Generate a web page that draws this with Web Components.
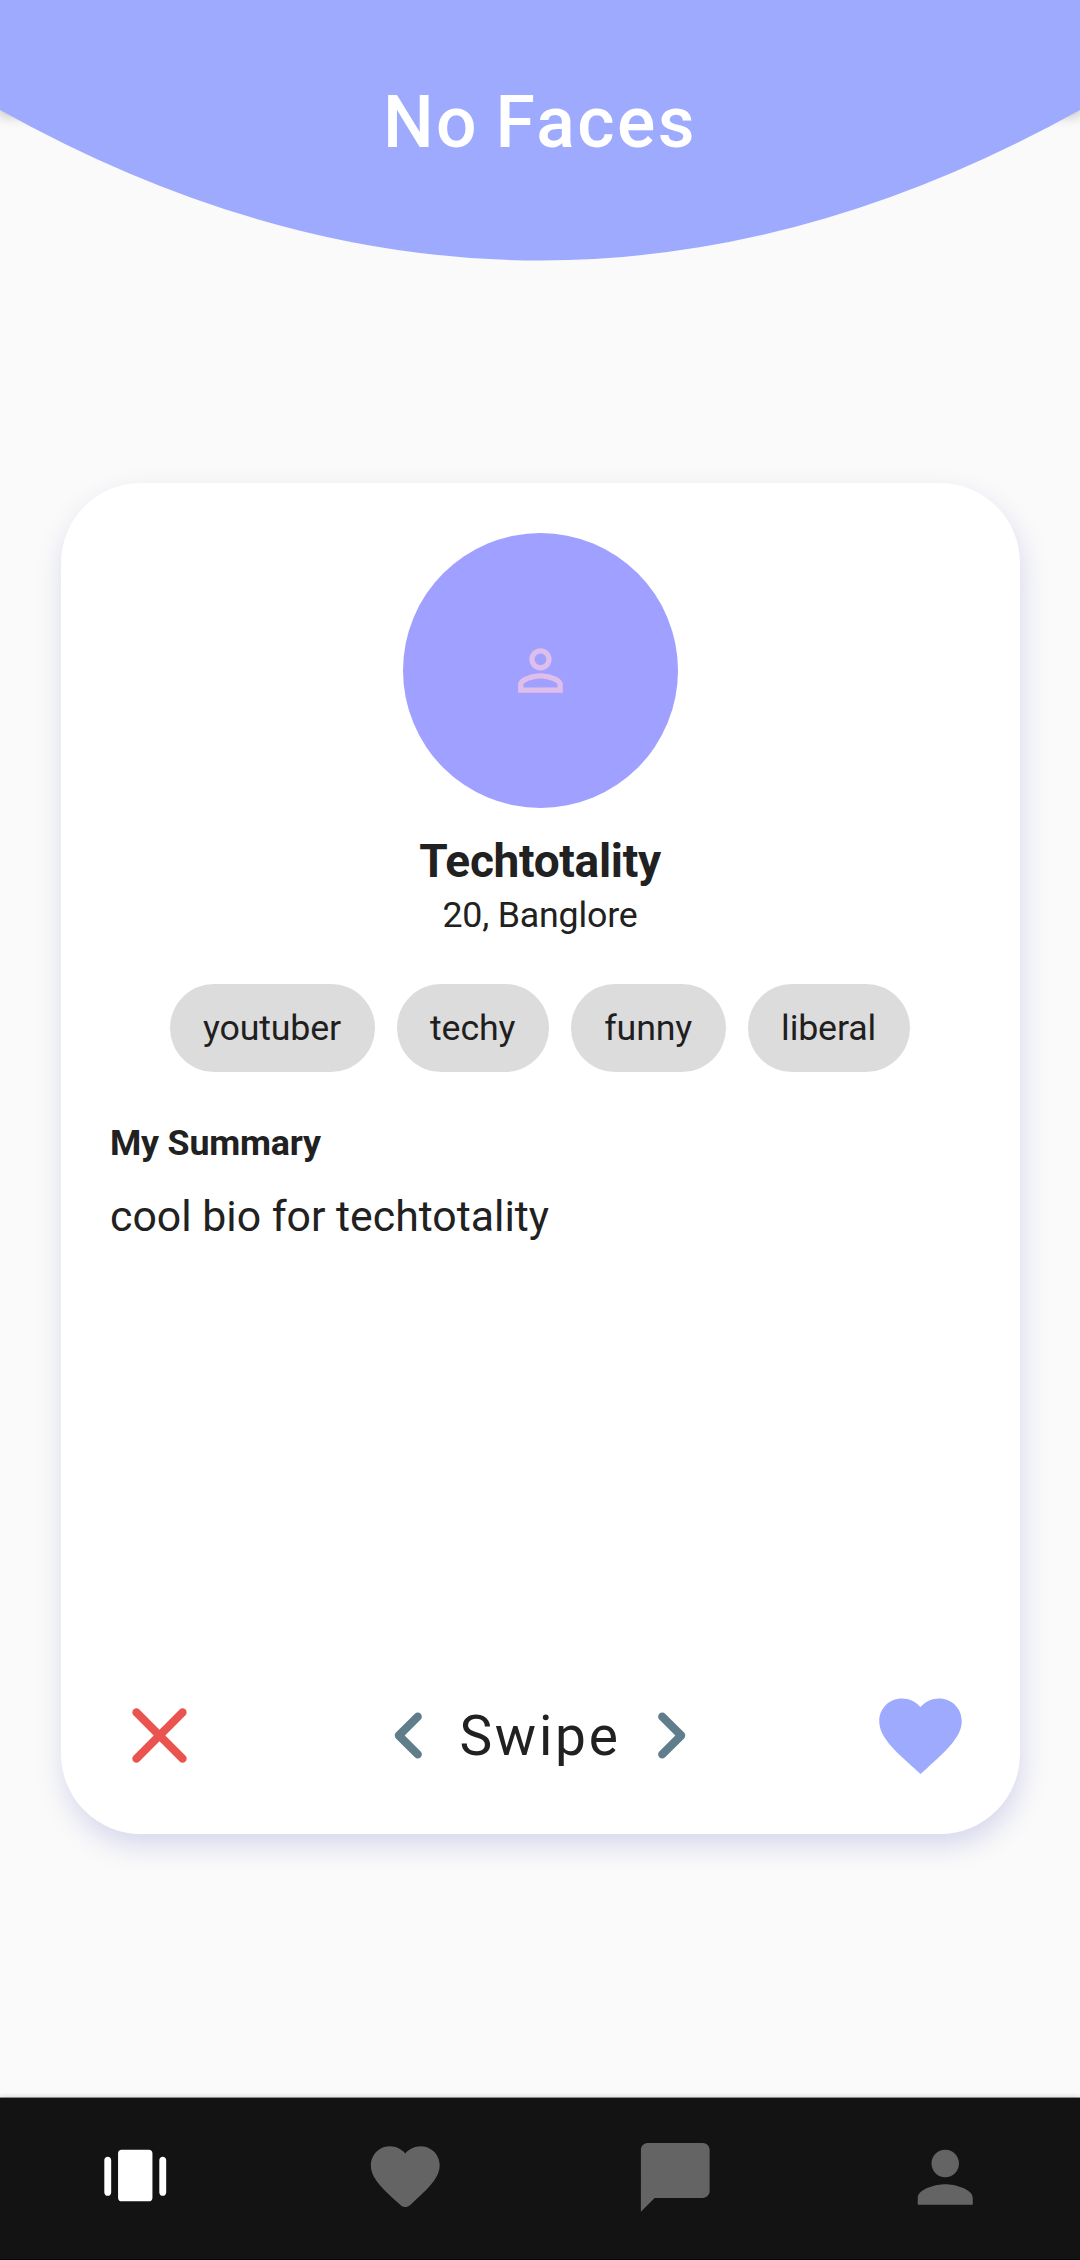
<!DOCTYPE html>
<html lang="en">
<head>
<meta charset="utf-8">
<title>No Faces</title>
<style>
html, body { margin: 0; background: #fafafa; }
body { font-family: Roboto, sans-serif; color: #212121; }
</style>
</head>
<body>
<faces-app></faces-app>
<script>
function define(name, html) {
  const template = document.createElement('template');
  template.innerHTML = html;
  customElements.define(name, class extends HTMLElement {
    constructor() {
      super();
      this.attachShadow({ mode: 'open' }).appendChild(template.content.cloneNode(true));
    }
  });
}

const ICONS = {
  close: 'M18.3 5.71c-.39-.39-1.02-.39-1.41 0L12 10.59 7.11 5.7c-.39-.39-1.02-.39-1.41 0-.39.39-.39 1.02 0 1.41L10.59 12 5.7 16.89c-.39.39-.39 1.02 0 1.41.39.39 1.02.39 1.41 0L12 13.41l4.89 4.89c.39.39 1.02.39 1.41 0 .39-.39.39-1.02 0-1.41L13.41 12l4.89-4.89c.38-.38.38-1.02 0-1.4z',
  left: 'M14.71 6.71c-.39-.39-1.02-.39-1.41 0L8.71 11.3c-.39.39-.39 1.02 0 1.41l4.59 4.59c.39.39 1.02.39 1.41 0 .39-.39.39-1.02 0-1.41L10.83 12l3.88-3.88c.39-.39.38-1.03 0-1.41z',
  right: 'M9.29 6.71c-.39.39-.39 1.02 0 1.41L13.17 12l-3.88 3.88c-.39.39-.39 1.02 0 1.41.39.39 1.02.39 1.41 0l4.59-4.59c.39-.39.39-1.02 0-1.41L10.7 6.7c-.38-.38-1.02-.38-1.41.01z',
  heart: 'M12 21.35l-1.45-1.32C5.4 15.36 2 12.28 2 8.5 2 5.42 4.42 3 7.5 3c1.74 0 3.41.81 4.5 2.09C13.09 3.81 14.76 3 16.5 3 19.58 3 22 5.42 22 8.5c0 3.78-3.4 6.86-8.55 11.54L12 21.35z',
  heartRound: 'M13.35 20.13c-.76.69-1.93.69-2.69-.01l-.11-.1C5.3 15.27 1.87 12.16 2 8.28c.06-1.7.93-3.33 2.34-4.29 2.64-1.8 5.9-.96 7.66 1.1 1.76-2.06 5.02-2.91 7.66-1.1 1.41.96 2.28 2.59 2.34 4.29.14 3.88-3.3 6.99-8.55 11.76l-.1.09z',
  chat: 'M20 2H4c-1.1 0-1.99.9-1.99 2L2 22l4-4h14c1.1 0 2-.9 2-2V4c0-1.1-.9-2-2-2z',
  person: 'M12 12c2.21 0 4-1.79 4-4s-1.79-4-4-4-4 1.79-4 4 1.79 4 4 4zm0 2c-2.67 0-8 1.34-8 4v2h16v-2c0-2.66-5.33-4-8-4z',
  personOutline: 'M12 5.9c1.16 0 2.1.94 2.1 2.1s-.94 2.1-2.1 2.1S9.9 9.16 9.9 8s.94-2.1 2.1-2.1m0 9c2.97 0 6.1 1.46 6.1 2.1v1.1H5.9V17c0-.64 3.13-2.1 6.1-2.1M12 4C9.79 4 8 5.79 8 8s1.79 4 4 4 4-1.79 4-4-1.79-4-4-4zm0 9c-2.67 0-8 1.34-8 4v3h16v-3c0-2.66-5.33-4-8-4z',
  stories: 'M8 4h8c.55 0 1 .45 1 1v13c0 .55-.45 1-1 1H8c-.55 0-1-.45-1-1V5c0-.55.45-1 1-1zM4 6c.55 0 1 .45 1 1v9.4c0 .55-.45 1-1 1s-1-.45-1-1V7c0-.55.45-1 1-1zM20 6c.55 0 1 .45 1 1v9.4c0 .55-.45 1-1 1s-1-.45-1-1V7c0-.55.45-1 1-1z'
};

customElements.define('app-icon', class extends HTMLElement {
  constructor() {
    super();
    this.attachShadow({ mode: 'open' });
  }
  connectedCallback() {
    this.shadowRoot.innerHTML = `
      <style>
        :host { display: block; flex: none; width: var(--size, 99px); height: var(--size, 99px); }
        svg { display: block; width: 100%; height: 100%; fill: currentColor; }
      </style>
      <svg viewBox="0 0 24 24"><path d="${ICONS[this.getAttribute('name')]}"/></svg>`;
  }
});

define('app-header', `
  <style>
    :host { display: grid; height: 261px; overflow: hidden; }
    .shade, svg, h1 { grid-area: 1 / 1; }
    .shade { height: 110px; box-shadow: 0 5px 12px rgba(0,0,0,.28); }
    svg { display: block; width: 1080px; height: 261px; z-index: 1; }
    h1 { z-index: 2; margin: 0; padding-top: 81px; text-align: center; color: #fff;
         font-size: 71.5px; font-weight: 550; line-height: 84px; letter-spacing: 2.5px; word-spacing: -4px; }
  </style>
  <div class="shade"></div>
  <svg viewBox="0 0 1080 261"><path fill="#9eaafe" d="M0 0H1080V110Q540 411 0 110Z"/></svg>
  <h1><slot></slot></h1>`);

define('tag-chip', `
  <style>
    :host { display: flex; align-items: center; height: 88px; padding: 0 34px 0 33px; border-radius: 44px;
            background: #dcdcdc; color: #1f1f1f; font-size: 35.75px; line-height: 42px; letter-spacing: -.15px; }
  </style>
  <slot></slot>`);

define('profile-avatar', `
  <style>
    :host { display: flex; align-items: center; justify-content: center; width: 275px; height: 275px;
            border-radius: 50%; background: #9fa0ff; color: #e0beea; --size: 67px; }
  </style>
  <app-icon name="personOutline"></app-icon>`);

define('swipe-actions', `
  <style>
    :host { display: flex; align-items: center; justify-content: space-between; }
    .mid { display: flex; align-items: center; color: #607d8b; }
    span { color: #212121; font-size: 55px; line-height: 64px; letter-spacing: 2.75px; }
    .no { color: #ea5450; } .yes { color: #9eaafe; }
  </style>
  <app-icon class="no" name="close"></app-icon>
  <div class="mid"><app-icon name="left"></app-icon><span><slot></slot></span><app-icon name="right"></app-icon></div>
  <app-icon class="yes" name="heart"></app-icon>`);

define('profile-card', `
  <style>
    :host { display: flex; flex-direction: column; box-sizing: border-box; width: 959px; height: 1351px;
            padding: 50px 49.5px 49px; border-radius: 80px; background: #fff;
            box-shadow: 2px 12px 27px rgba(90,100,190,.22); }
    .top { display: flex; flex-direction: column; align-items: center; }
    .name { margin-top: 26px; font-size: 46px; font-weight: 700; line-height: 55px; letter-spacing: -.3px; }
    .place { margin-top: 5px; font-size: 35.75px; line-height: 42px; letter-spacing: -.2px; }
    .tags { display: flex; justify-content: center; gap: 22px; margin-top: 48px; }
    .label { margin-top: 50px; font-size: 35.75px; font-weight: 700; line-height: 42px; letter-spacing: -.2px; }
    .bio { margin-top: 27px; font-size: 42.8px; line-height: 50px; }
    swipe-actions { margin-top: auto; }
  </style>
  <div class="top">
    <profile-avatar></profile-avatar>
    <div class="name"><slot name="name"></slot></div>
    <div class="place"><slot name="place"></slot></div>
  </div>
  <div class="tags"><slot name="tag"></slot></div>
  <div class="label">My Summary</div>
  <div class="bio"><slot name="bio"></slot></div>
  <swipe-actions>Swipe</swipe-actions>`);

define('bottom-nav', `
  <style>
    :host { display: grid; grid-template-columns: repeat(4, 1fr); justify-items: center; align-items: start;
            box-sizing: border-box; height: 163px; padding-top: 38px; background: #131313; color: #646464;
            border-top: 1px solid #8b8b8b; border-bottom: 1px solid #000;
            box-shadow: 0 -1px 4px rgba(0,0,0,.12); --size: 82.5px; }
    .active { color: #fff; }
  </style>
  <app-icon class="active" name="stories"></app-icon>
  <app-icon name="heartRound"></app-icon>
  <app-icon name="chat"></app-icon>
  <app-icon name="person"></app-icon>`);

define('faces-app', `
  <style>
    :host { display: flex; flex-direction: column; width: 1080px; height: 2260px; overflow: hidden; background: #fafafa; }
    profile-card { align-self: center; margin-top: 222px; }
    bottom-nav { margin-top: auto; }
  </style>
  <app-header>No Faces</app-header>
  <profile-card>
    <span slot="name">Techtotality</span>
    <span slot="place">20, Banglore</span>
    <tag-chip slot="tag">youtuber</tag-chip>
    <tag-chip slot="tag">techy</tag-chip>
    <tag-chip slot="tag">funny</tag-chip>
    <tag-chip slot="tag">liberal</tag-chip>
    <span slot="bio">cool bio for techtotality</span>
  </profile-card>
  <bottom-nav></bottom-nav>`);
</script>
</body>
</html>
